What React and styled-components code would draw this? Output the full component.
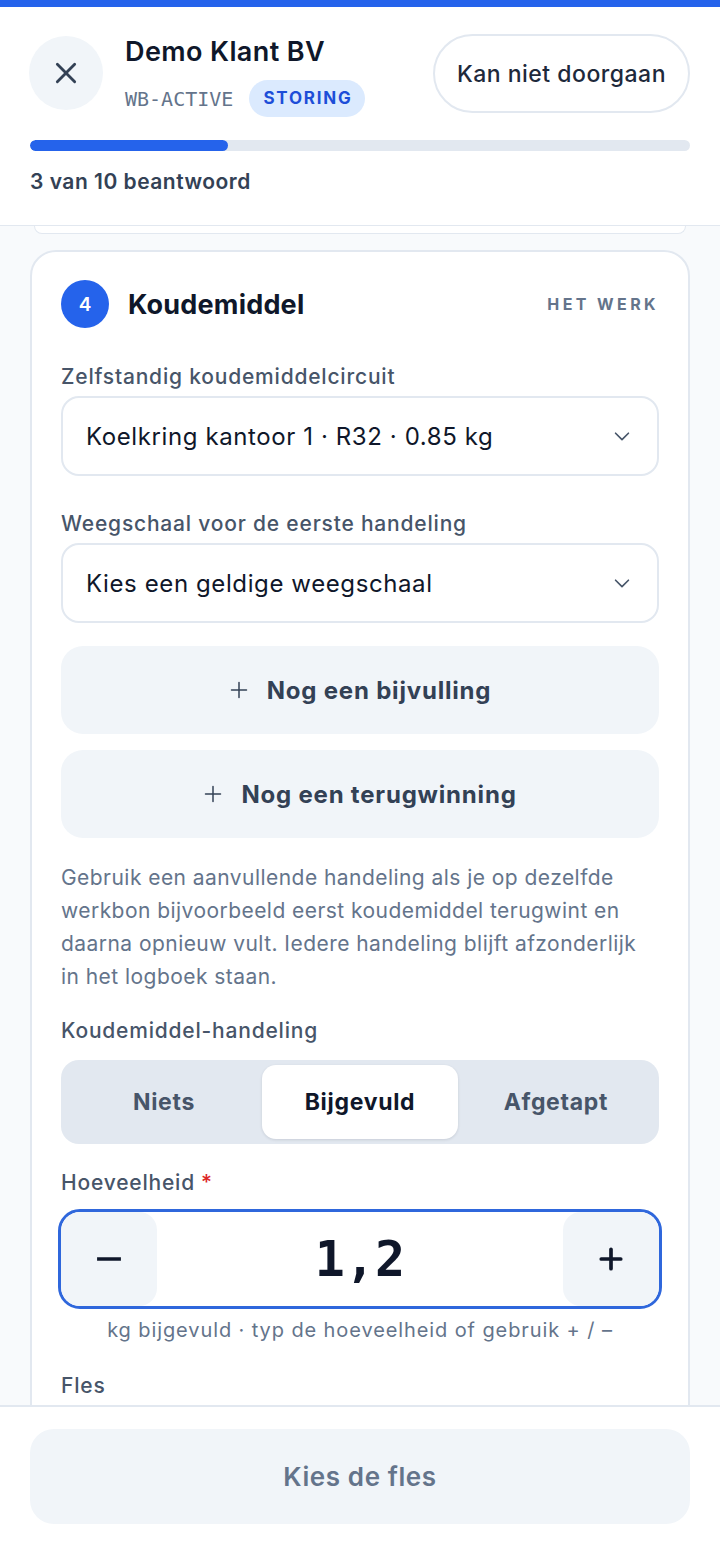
import React from 'react'
import styled, { createGlobalStyle } from 'styled-components'

const GlobalStyle = createGlobalStyle`
  html, body {
    margin: 0;
    padding: 0;
    background: #f8fafc;
  }
  body {
    font-family: Inter, "Noto Sans", sans-serif;
    color: #0f172a;
    -webkit-font-smoothing: antialiased;
  }
  * { box-sizing: border-box; }
`

const Screen = styled.div`
  height: 100vh;
  display: flex;
  flex-direction: column;
  overflow: hidden;
  background: #f8fafc;
`

const TopBar = styled.div`
  height: 7px;
  background: #2563eb;
  flex-shrink: 0;
`

const Header = styled.header`
  background: #fff;
  border-bottom: 1px solid #e2e8f0;
  padding: 27px 30px 0;
  height: 219px;
  flex-shrink: 0;
`

const HeaderRow = styled.div`
  display: flex;
  align-items: flex-start;
  gap: 22px;
`

const CloseButton = styled.button`
  width: 74px;
  height: 74px;
  border-radius: 50%;
  border: none;
  background: #f1f5f9;
  display: flex;
  align-items: center;
  justify-content: center;
  color: #334155;
  flex-shrink: 0;
  padding: 0;
  margin-left: -1px;
  margin-top: 2px;
`

const TitleBlock = styled.div`
  flex: 1;
  display: flex;
  flex-direction: column;
  gap: 11px;
  margin-top: 1px;
`

const Title = styled.h1`
  margin: 0;
  font-size: 27px;
  font-weight: 600;
  letter-spacing: 0.4px;
  line-height: 34px;
  color: #0f172a;
`

const MetaRow = styled.div`
  display: flex;
  align-items: center;
  gap: 16px;
`

const Code = styled.span`
  font-family: "DejaVu Sans Mono", "Liberation Mono", monospace;
  font-size: 20px;
  color: #64748b;
`

const Badge = styled.span`
  background: #dbeafe;
  color: #1d4ed8;
  font-size: 17px;
  font-weight: 700;
  letter-spacing: 1.8px;
  padding: 0 12px 0 14px;
  height: 37px;
  line-height: 37px;
  border-radius: 19px;
`

const GhostButton = styled.button`
  font-family: inherit;
  height: 79px;
  padding: 0 22px;
  border-radius: 40px;
  border: 2px solid #e2e8f0;
  background: #fff;
  color: #1e293b;
  font-size: 23px;
  font-weight: 500;
  letter-spacing: 0.5px;
  flex-shrink: 0;
`

const Progress = styled.div`
  margin-top: 23px;
  height: 11px;
  border-radius: 6px;
  background: #e2e8f0;
  overflow: hidden;
`

const ProgressFill = styled.div`
  height: 100%;
  background: #2563eb;
  border-radius: 6px;
`

const ProgressText = styled.div`
  margin-top: 18px;
  font-size: 21px;
  font-weight: 600;
  letter-spacing: 0.5px;
  color: #334155;
`

const Scroll = styled.main`
  flex: 1;
  overflow: hidden;
  padding: 0 30px;
`

const PrevCardTail = styled.div`
  height: 8px;
  margin: 0 4px;
  background: #fff;
  border: 1px solid #e2e8f0;
  border-top: none;
  border-radius: 0 0 20px 20px;
`

const Card = styled.section`
  margin-top: 16px;
  background: #fff;
  border: 2px solid #e2e8f0;
  border-radius: 26px;
  padding: 28px 29px 80px;
`

const CardHeader = styled.div`
  display: flex;
  align-items: center;
  gap: 19px;
  height: 48px;
`

const StepDot = styled.div`
  width: 48px;
  height: 48px;
  border-radius: 50%;
  background: #2563eb;
  color: #fff;
  font-size: 19px;
  font-weight: 600;
  display: flex;
  align-items: center;
  justify-content: center;
`

const CardTitle = styled.h2`
  margin: 0;
  flex: 1;
  font-size: 27px;
  font-weight: 700;
  letter-spacing: 0.2px;
  color: #0f172a;
`

const Section = styled.div`
  font-size: 16px;
  font-weight: 700;
  letter-spacing: 3.4px;
  color: #64748b;
`

const Label = styled.div`
  margin-top: ${p => p.$mt || 0}px;
  font-size: 21px;
  font-weight: 500;
  letter-spacing: 0.8px;
  line-height: 28px;
  color: #475569;
`

const Required = styled.span`
  color: #dc2626;
  margin-left: 6px;
`

const Select = styled.div`
  margin-top: 5px;
  height: 80px;
  border: 2px solid #e2e8f0;
  border-radius: 18px;
  display: flex;
  align-items: center;
  justify-content: space-between;
  padding: 0 24px 0 23px;
  font-size: 24px;
  letter-spacing: 0.6px;
  color: #0f172a;
`

const AddButton = styled.button`
  font-family: inherit;
  width: 100%;
  height: 88px;
  margin-top: ${p => p.$mt}px;
  border: none;
  border-radius: 22px;
  background: #f1f5f9;
  color: #334155;
  font-size: 24px;
  font-weight: 700;
  letter-spacing: 0.8px;
  display: flex;
  align-items: center;
  justify-content: center;
  gap: 18px;
`

const Help = styled.p`
  margin: 23px 0 0;
  font-size: 21px;
  letter-spacing: 0.45px;
  line-height: 33px;
  color: #64748b;
`

const Segmented = styled.div`
  margin-top: 15px;
  height: 84px;
  background: #e2e8f0;
  border-radius: 18px;
  padding: 5px;
  display: grid;
  grid-template-columns: repeat(3, 1fr);
`

const Segment = styled.div`
  border-radius: 14px;
  display: flex;
  align-items: center;
  justify-content: center;
  font-size: 23px;
  font-weight: 700;
  letter-spacing: 0.7px;
  color: ${p => (p.$active ? '#0f172a' : '#475569')};
  background: ${p => (p.$active ? '#fff' : 'transparent')};
  box-shadow: ${p => (p.$active ? '0 1px 3px rgba(15,23,42,0.12)' : 'none')};
`

const Stepper = styled.div`
  margin: 12px -3px 0;
  height: 100px;
  border: 3px solid #2f67dc;
  border-radius: 22px;
  display: flex;
  align-items: stretch;
  overflow: hidden;
`

const StepButton = styled.button`
  font-family: inherit;
  width: 96px;
  border: none;
  background: #f1f5f9;
  border-radius: 18px;
  display: flex;
  align-items: center;
  justify-content: center;
  color: #0f172a;
  padding: 0;
`

const Amount = styled.div`
  flex: 1;
  display: flex;
  align-items: center;
  justify-content: center;
  font-family: "DejaVu Sans Mono", "Liberation Mono", monospace;
  font-size: 50px;
  font-weight: 700;
  color: #0f172a;
`

const Hint = styled.div`
  margin-top: 9px;
  text-align: center;
  font-size: 20px;
  letter-spacing: 0.9px;
  color: #64748b;
`

const Footer = styled.footer`
  flex-shrink: 0;
  background: #fff;
  border-top: 2px solid #e2e8f0;
  padding: 22px 30px 34px;
`

const PrimaryButton = styled.button`
  font-family: inherit;
  width: 100%;
  height: 95px;
  border: none;
  border-radius: 24px;
  background: #f1f5f9;
  color: #64748b;
  font-size: 26px;
  font-weight: 600;
  letter-spacing: 0.6px;
`

const Chevron = () => (
  <svg width="22" height="22" viewBox="0 0 24 24" fill="none" stroke="#475569" strokeWidth="1.8" strokeLinecap="round" strokeLinejoin="round">
    <path d="M5 9l7 7 7-7" />
  </svg>
)

const PlusIcon = ({ size = 22, width = 2 }) => (
  <svg width={size} height={size} viewBox="0 0 24 24" fill="none" stroke="currentColor" strokeWidth={width} strokeLinecap="round">
    <path d="M12 3v18M3 12h18" />
  </svg>
)

const App = () => {
  const answered = 3
  const total = 10
  return (
    <>
      <GlobalStyle />
      <Screen>
        <TopBar />
        <Header>
          <HeaderRow>
            <CloseButton aria-label="Sluiten">
              <svg width="26" height="26" viewBox="0 0 24 24" fill="none" stroke="currentColor" strokeWidth="2.6" strokeLinecap="round">
                <path d="M4 4l16 16M20 4L4 20" />
              </svg>
            </CloseButton>
            <TitleBlock>
              <Title>Demo Klant BV</Title>
              <MetaRow>
                <Code>WB-ACTIVE</Code>
                <Badge>STORING</Badge>
              </MetaRow>
            </TitleBlock>
            <GhostButton>Kan niet doorgaan</GhostButton>
          </HeaderRow>
          <Progress>
            <ProgressFill style={{ width: `${(answered / total) * 100}%` }} />
          </Progress>
          <ProgressText>{answered} van {total} beantwoord</ProgressText>
        </Header>

        <Scroll>
          <PrevCardTail />
          <Card>
            <CardHeader>
              <StepDot>4</StepDot>
              <CardTitle>Koudemiddel</CardTitle>
              <Section>HET WERK</Section>
            </CardHeader>

            <Label $mt={35}>Zelfstandig koudemiddelcircuit</Label>
            <Select>
              <span>Koelkring kantoor 1 · R32 · 0.85 kg</span>
              <Chevron />
            </Select>

            <Label $mt={34}>Weegschaal voor de eerste handeling</Label>
            <Select>
              <span>Kies een geldige weegschaal</span>
              <Chevron />
            </Select>

            <AddButton $mt={23}>
              <PlusIcon size={20} width={1.8} />
              Nog een bijvulling
            </AddButton>
            <AddButton $mt={16}>
              <PlusIcon size={20} width={1.8} />
              Nog een terugwinning
            </AddButton>

            <Help>
              Gebruik een aanvullende handeling als je op dezelfde werkbon bijvoorbeeld eerst koudemiddel terugwint en daarna opnieuw vult. Iedere handeling blijft afzonderlijk in het logboek staan.
            </Help>

            <Label $mt={24}>Koudemiddel-handeling</Label>
            <Segmented>
              <Segment>Niets</Segment>
              <Segment $active>Bijgevuld</Segment>
              <Segment>Afgetapt</Segment>
            </Segmented>

            <Label $mt={25}>
              Hoeveelheid<Required>*</Required>
            </Label>
            <Stepper>
              <StepButton aria-label="Minder">
                <svg width="26" height="26" viewBox="0 0 24 24" fill="none" stroke="currentColor" strokeWidth="3.4">
                  <path d="M1 12h22" />
                </svg>
              </StepButton>
              <Amount>1,2</Amount>
              <StepButton aria-label="Meer">
                <PlusIcon size={26} width={3.4} />
              </StepButton>
            </Stepper>
            <Hint>kg bijgevuld · typ de hoeveelheid of gebruik + / –</Hint>

            <Label $mt={30}>Fles</Label>
          </Card>
        </Scroll>

        <Footer>
          <PrimaryButton>Kies de fles</PrimaryButton>
        </Footer>
      </Screen>
    </>
  )
}

export default App
